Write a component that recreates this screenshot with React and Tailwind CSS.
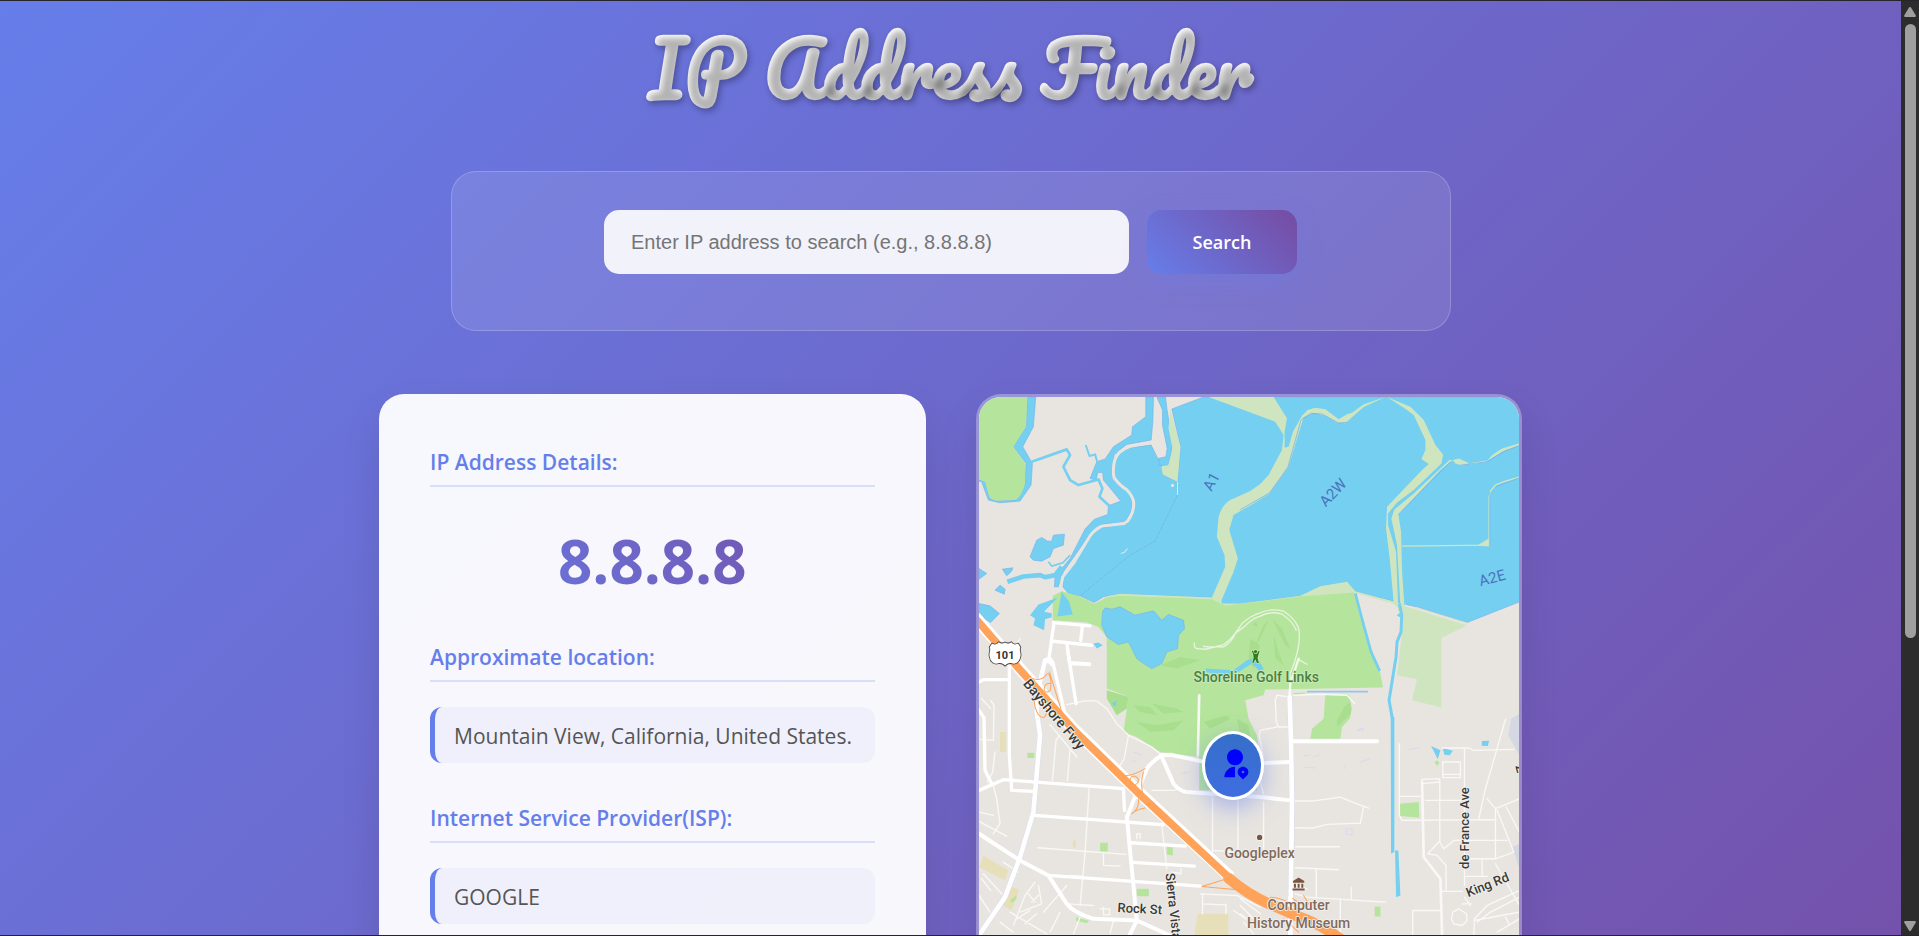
import React from "react";
import { RiUserLocationFill } from "react-icons/ri";

const DETAILS = [
  { label: "Approximate location:", value: "Mountain View, California, United States." },
  { label: "Internet Service Provider(ISP):", value: "GOOGLE" },
];

function SectionTitle({ children }) {
  return (
    <h2 className="border-b-2 border-[#667eea]/20 pb-2 text-[21px]/[30px] font-semibold text-[#667eea]">
      {children}
    </h2>
  );
}

function SearchPanel() {
  return (
    <form
      className="mx-auto flex w-full max-w-[1000px] justify-center gap-[18px] rounded-[25px] border border-white/20 bg-white/10 pt-[38px] pb-14"
      onSubmit={(e) => e.preventDefault()}
    >
      <input
        type="text"
        aria-label="IP address"
        placeholder="Enter IP address to search (e.g., 8.8.8.8)"
        className="h-16 w-[525px] rounded-[15px] bg-white/90 px-[27px] font-['Liberation_Sans',Arial,sans-serif] text-xl text-gray-800 outline-none placeholder:text-[#757575]"
      />
      <button
        type="submit"
        className="h-16 w-[150px] rounded-[15px] bg-[linear-gradient(45deg,#667eea,#764ba2)] text-lg font-semibold text-white shadow-[0_8px_25px_rgba(102,126,234,0.3)]"
      >
        Search
      </button>
    </form>
  );
}

function DetailsCard() {
  return (
    <section className="rounded-[25px] bg-white/95 px-[51px] pt-[53px] shadow-[0_20px_40px_rgba(0,0,0,0.1)]">
      <SectionTitle>IP Address Details:</SectionTitle>
      <p className="mt-[33px] bg-[linear-gradient(45deg,#667eea,#764ba2)] bg-clip-text text-center text-[60px]/[82px] font-bold text-transparent">
        8.8.8.8
      </p>
      {DETAILS.map((d) => (
        <div key={d.label} className="mt-10">
          <SectionTitle>{d.label}</SectionTitle>
          <p className="mt-[25px] rounded-xl border-l-[5px] border-[#667eea] bg-[#667eea]/5 pt-[13px] pb-[11px] pl-[19px] text-[21px]/[32px] whitespace-nowrap text-[#555]">
            {d.value}
          </p>
        </div>
      ))}
    </section>
  );
}

const WATER = "#75cff0";
const PARK = "#b5e59c";
const MARSH = "#cfe5c0";
const LAND = "#e8e5e0";

function Terrain() {
  return (
    <g>
      <rect x="27" y="36" width="1620" height="1764" fill={LAND} />
      {/* bay ponds */}
      <g fill={WATER} stroke="#74b4ee" strokeWidth="2">
        <path d="M605 72 700 36H1647V650L1490 712 1340 665 1300 658 1270 648 1150 618 990 632 810 657 750 655 725 637 450 627 400 635 372 652 330 632 300 630 278 605 280 575 310 540 360 455 395 427 460 418 485 390 495 355 480 320 430 275 425 240 440 205 480 188 543 180 560 215 575 240 578 268 622 290 631 185Z" />
        <path d="M527 36H550L548 110 543 165 470 178 432 208 425 265 480 325 488 370 465 410 395 418 357 450 280 560 265 605 253 605 255 575 300 520 345 432 372 403 413 388 415 362 452 348 400 285 398 262 383 262 378 285 360 280 380 230 405 222 430 185 485 150 487 125 527 95Z" />
        <path d="M560 36H586L590 70 607 180 603 205 593 242 568 240 565 220 587 215 591 190 577 120V75Z" />
        <path d="M172 36H197L190 125 158 185 187 235 183 300 150 348 90 353 55 345 35 290 27 288V283L45 290 60 340 80 347 135 345 165 295 168 235 130 185 168 125Z" />
        <path d="M180 515 200 465 215 457 232 468H245L250 450 283 447 280 480 250 490 240 515 215 528 190 525Z" />
        <path d="M27 550 50 565 27 582ZM97 552 128 548 125 558 110 572ZM75 615 90 600 105 612 103 627ZM27 655 60 662 88 685 62 712 27 690Z" />
      </g>
      <path d="M543 172 480 184 Q462 190 447 203 Q432 220 431 240 Q428 262 432 278 Q450 302 470 314 Q490 335 491 355 Q490 380 481 395 Q475 408 462 415 L395 423 Q375 432 360 452 L310 535 278 575 270 615" fill="none" stroke={LAND} strokeWidth="9" />
      <g fill="none" stroke={WATER} strokeLinejoin="round">
        <path d="M185 230 290 193 300 210 280 245 300 285 325 300 385 283 397 310 388 335 417 362" strokeWidth="8" />
        <path d="M347 180 358 213 375 208 384 240" strokeWidth="6" />
        <path d="M235 530 245 543 278 533 300 510" strokeWidth="5" />
        <path d="M112 590 160 574 210 570 225 576 255 570 275 545" strokeWidth="14" />
      </g>
      <path d="M622 330 555 468 480 510 332 630" fill="none" stroke="#74ade8" strokeWidth="2" strokeDasharray="12 3" />
      <path d="M622 290V330M452 505 462 502 472 490" fill="none" stroke={LAND} strokeWidth="3" />
      <circle cx="607" cy="301" r="5" fill={LAND} />
      <path d="M27 36H172L168 125 130 185 165 235V295Q155 335 135 345 L80 347 Q62 345 56 330 L45 290 27 283Z" fill={PARK} />

      {/* levees */}
      <g fill={MARSH}>
        <path d="M600 72 631 185 622 290 578 268 573 245 595 240 607 190 595 130Z" />
        <path d="M715 36H910L950 100 943 140V188L955 185 968 140 995 92 1012 75 1035 68 1065 73 1105 103 1130 88 1145 83 1180 58 1245 36 1180 66 1150 92 1125 115 1100 113 1065 92 1030 83 1000 97 985 145 955 245 898 325 845 358 790 390 777 435 803 520 790 560 752 650 725 637 765 545 763 510 740 455 745 395 Q755 360 780 345 L840 318 870 297 895 270 935 195 940 150 915 110Z" />
        <path d="M725 637 752 640 755 655 810 655 990 632 1050 603 1130 590 1155 618 1272 650 1300 658 1300 680 1100 660 765 668 450 636 372 660 410 633 450 626Z" />
      </g>
      <g transform="translate(810 0)">
        <g fill={MARSH}>
          <path d="M440 36 490 68 520 90 555 165V195L543 222 565 237 545 255 440 365 437 430 448 520 460 652 473 655 467 500 443 420V385L470 352 520 315 603 235 608 208 585 180 550 105 510 65Z" />
          <path d="M637 225H627L520 325 462 373 453 400 470 480 480 660H492L485 560 482 440 474 388 600 255Z" />
          <path d="M637 225 655 220 690 236 665 241 645 235ZM740 228 755 210 785 190 837 175V182L790 197ZM745 460V484L710 481Z" />
          <path d="M488 660 530 667 680 712 676 722 603 758V967L515 945 530 882 470 870 485 740Z" />
        </g>
        <path d="M690 236 740 228M837 276 790 290 765 300 750 318 746 335V480L485 483" fill="none" stroke={MARSH} strokeWidth="4" />
        <path d="M493 660 680 718" fill="none" stroke={LAND} strokeWidth="5" />
        <path d="M0 374 88 323 143 246 182 105 212 85 245 87 295 114 320 112M748 320V483M474 388 630 230M660 240 740 230 790 200 837 181M837 278 765 305" fill="none" stroke="#74a8f0" strokeWidth="2" />
      </g>

      {/* golf course */}
      <path d="M248 632 275 618 330 634 372 656 410 637 450 632 725 642 765 662 990 634 1150 622 1160 650 1225 840 1238 907 885 913 880 930 825 945 835 1000 860 1050 865 1100 860 1215H687V1115L570 1100 500 1055 460 1040 475 935 410 910V755L385 725 350 712 248 705Z" fill={PARK} />
      <g fill="#a8de8d">
        <path d="M410 915 475 935 470 970 440 990 410 940ZM490 960 540 965 560 990 510 980ZM545 955 620 970 640 980 580 985ZM500 1010 560 1020 640 1005 610 1035 540 1040ZM800 1000 835 1020 840 1060 810 1050ZM570 840 630 815 690 825 620 850ZM700 1010 770 990 780 1000 720 1030Z" />
        <path d="M880 720 895 705 870 760 850 790ZM905 700 935 730 960 790 945 780ZM910 750 925 800 940 840 915 820ZM840 760 870 780 850 850 835 820ZM855 710 865 725 845 720Z" />
      </g>
      <path d="M397 680 405 668 425 672 450 665 495 690 550 677 575 705 595 688 640 705 643 730 625 750 622 790 590 800 575 835 545 850 520 835 500 820 475 770 445 778 410 755 395 720Z" fill={WATER} stroke="#74b4ee" strokeWidth="2" />
      <path d="M275 620 297 650 308 688 262 694ZM262 638 205 658 180 690 195 700 190 720 222 735 225 702 245 696V684L222 680ZM425 955 440 945 435 965ZM370 775 385 772 398 780 380 790ZM705 850 790 855 830 825 860 815 880 850 870 860 845 835 790 870 710 862Z" fill={WATER} />
      <g transform="translate(810 0)">
        <path d="M350 625 457 655 472 668 470 850 435 897 418 850 395 800Z" fill={LAND} />
        <path d="M345 625 370 720 392 800 418 857" fill="none" stroke={WATER} strokeWidth="8" />
        <path d="M477 655 484 690 482 740 470 770 467 815 446 945 456 1000" fill="none" stroke={WATER} strokeWidth="9" />
        <path d="M469 690 480 682V697ZM451 995H462V1400L452 1405ZM464 1395H474L480 1530 467 1535Z" fill={WATER} />
        <path d="M200 919H383" stroke="#8fc8ee" strokeWidth="5" />
        <g fill={PARK}>
          <path d="M255 928H325L335 970 328 1000 305 1025 300 1060H210L215 1030 250 1000ZM160 923 205 922 160 933Z" />
          <path d="M478 1255 535 1250 537 1297 478 1292ZM403 1563H420V1593H403ZM582 1130 590 1125 597 1133 590 1142Z" />
        </g>
        <path d="M290 1005 312 965 330 950 332 985 290 1025Z" fill="#a8de8d" />
        <path d="M572 1082 600 1095 592 1122ZM607 1088 637 1096 628 1110 612 1108ZM724 1067 746 1066 742 1082 724 1081Z" fill={WATER} />
        <path d="M837 985 812 1000 803 1050 837 1110ZM837 1375 815 1385 837 1450Z" fill="#d5d7e2" />
      </g>
      <g transform="translate(0 810)">
        <path d="M90 230H108V290H90ZM40 600 115 645 105 675 27 635ZM110 690 148 702 125 765 98 750ZM308 555H318V577H308ZM683 775H775V840H672Z" fill="#e6dfb9" />
        <path d="M172 292H193V308H172ZM390 562H413V588H390ZM590 573 608 577V600L590 597ZM500 700H536V722H500ZM120 735 138 720 140 728 127 742ZM318 785 357 796 350 803 318 796Z" fill={PARK} />
      </g>
    </g>
  );
}

function Roads() {
  return (
    <g fill="none" strokeLinecap="round" strokeLinejoin="round">
      <g stroke="#f9f8f6" strokeWidth="4">
        <g transform="translate(0 810)">
          <path d="M62 135 72 150 70 255 30 252M62 160 35 130M75 290 68 350 52 380M268 240 258 255 247 375M300 285 292 375M240 208 320 305M290 148 345 137 380 137 410 160 440 205 475 240 545 275 575 300M475 240 462 310 450 330 430 335" />
          <path d="M357 400 345 590 330 750M203 577 467 597M545 405H612L630 398M575 510 590 640M500 550V535H510V550M400 590V630L450 632M68 385 80 430 90 505 70 535M27 470 70 480M27 498 110 542M605 650 632 655V640" />
          <path d="M100 620 145 650M35 670 62 705M40 655 95 715M27 720 60 770M195 680 165 720 130 810M205 690 215 745 150 770M120 770 230 835M140 790 180 765M165 805 200 775M90 800 130 830M220 770 290 690M290 745 370 750M390 760H418V778H400V755M270 770 240 830M330 785 310 835M430 795 420 835M185 740 205 720M175 715 195 740" />
          <path d="M727 425V590M803 435V590M727 585 803 590M690 715 800 720 870 755M697 715V775M767 745V775M697 745 765 748M790 765 870 820M820 800 850 835M300 660 335 662" />
          <path d="M687 120 683 300" strokeWidth="8" />
        </g>
        <g transform="translate(810 810)">
          <path d="M145 125 110 120 105 135 108 200 115 215 145 215M110 215 60 225 57 240 68 300 60 380 70 415M160 120 240 117 320 120 343 145M165 437 215 437 300 425 355 448 385 458M370 452 360 503 260 507 215 518 165 517M165 574H297M165 637 295 643M228 643V725M70 440V580M165 715 200 725 435 740M333 695V730M300 730V840M200 700 170 690" />
          <path d="M477 265V480L485 495 715 493H767M477 423H540M555 435H670M605 278H685L700 285 820 282M672 278V620M607 320H660V367H607ZM610 357H657M598 370V560L610 580 640 555H800M598 370 545 372V385L598 380M795 192 735 400 715 490M740 430 765 460V610M765 460 837 430M770 465 820 590 765 610H672M797 455 837 530M725 612V660M672 663H740M765 625 837 750M595 560 562 595 590 600 617 630V705" />
          <path d="M517 840V765H605M605 708H665M672 640V690M672 725 690 750M665 745H692M700 840 702 790 740 750 837 705M710 800 750 770 837 725M700 795 837 770M795 785 805 805M770 830 837 790M637 770 655 760 678 775 680 795 665 810 640 805 633 790Z" />
          <path d="M545 380 550 605 600 670 605 840" strokeWidth="8" />
          <path d="M0 730 60 775M0 750 40 790M0 775 25 795" />
        </g>
        <path d="M672 773Q672 790 682 790L705 792 755 780Q780 770 815 715Q840 692 870 683Q900 668 940 678Q975 700 985 730Q995 780 960 865L958 915M712 785 760 785Q785 770 795 745L825 722Q845 700 870 693Q900 676 935 687Q965 705 978 735M985 823 1010 837M700 783 712 785" opacity=".75" />
        <path d="M150 760 130 790M240 830 255 850" />
      </g>

      <g stroke="#d9dced" strokeWidth="17">
        <path d="M30 1645 105 1535 150 1415 190 1280 210 1050 200 980 205 910 225 825M958 935 962 1060 965 1250 960 1650" />
      </g>
      <g stroke="#fff" strokeWidth="10">
        <path d="M250 712 360 722M337 722 332 765M250 768 364 780M290 772 298 832 358 836M252 712 235 830" />
        <g transform="translate(0 810)">
          <path d="M30 835 105 725 150 605 190 470 210 240 200 170 205 100 225 15 240 12 245 25" strokeWidth="14" />
          <path d="M27 405 100 373 460 400 463 465M27 80 40 73H115M118 25V300L125 405 195 408M27 165 42 188 45 345 65 385M195 480 580 508M225 15 248 20 290 200M292-20 318 145M300 25 358 28M482 562 645 572M487 621 673 632" />
          <path d="M27 535 150 615 235 660 290 745Q310 772 370 790L500 795 600 840M478 840 500 795 470 485 530 340Q545 318 575 300L600 298 695 318M575 305 610 385Q630 408 650 410L870 425 960 435" strokeWidth="12" />
          <path d="M235 660 690 692" />
        </g>
        <g transform="translate(810 810)">
          <path d="M148 125 152 250 155 440 150 840" strokeWidth="14" />
          <path d="M155 258H410M75 323 150 320" strokeWidth="12" />
          <path d="M148 120 150 85 175 10" strokeWidth="7" opacity=".8" />
        </g>
      </g>

      <path d="M15 695 145 845 310 1030 510 1225 780 1475" stroke="#fff" strokeWidth="36" strokeLinecap="butt" />
      <g stroke="#ffa35b">
        <g strokeWidth="3">
          <path d="M235 865Q248 885 240 915Q225 928 222 910Q225 892 240 895M238 860 275 980M190 930 195 965Q205 1000 222 996Q235 985 228 965M190 880Q215 890 232 865M465 1172Q495 1168 525 1150M480 1190Q478 1172 493 1172Q508 1178 504 1190L490 1205M520 1160Q510 1190 518 1225M485 1285Q500 1272 525 1268M485 1285Q508 1270 505 1240M695 1503 770 1480M695 1503 825 1515" />
          <path d="M900 1535Q960 1540 990 1580L1010 1620M960 1535 1000 1560M940 1600 985 1640M1000 1530 1015 1555 980 1575" />
        </g>
        <path d="M15 698 145 848 310 1033 510 1228 780 1480" strokeWidth="23" strokeLinecap="butt" />
        <path d="M775 1478 Q830 1525 890 1552 L980 1592 Q1050 1615 1110 1660" strokeWidth="32" />
      </g>
      <path d="M960 1535 960 1560M960 1625V1660" stroke="#fff" strokeWidth="12" />
      <g stroke="#d8daeb" strokeWidth="3">
        <path d="M1000 1112 1020 1108M1030 1115 1048 1108M1000 1146 1035 1148M1160 1035 1175 1028 1180 1035ZM1170 1130 1200 1120M1125 1140V1150M1128 1330H1145V1348H1128ZM1310 1093 1345 1088M635 1165 655 1160M490 1100 515 1110M485 1130 500 1125" />
      </g>
    </g>
  );
}

function MapLabels() {
  return (
    <g
      className="font-['Roboto',sans-serif] font-medium"
      fontSize="42"
      textAnchor="middle"
      stroke="#f3f1ec"
      strokeWidth="5"
      strokeLinejoin="round"
      paintOrder="stroke"
    >
      <g fill="#4a74bb" stroke="none" fontSize="45" className="font-normal">
        <text transform="translate(737 297) rotate(-62)">A1</text>
        <text transform="translate(1099 333) rotate(-46)">A2W</text>
        <text transform="translate(1569 593) rotate(-15)">A2E</text>
      </g>
      <text x="858" y="889" fill="#4b8040" stroke="#cdebbb">Shoreline Golf Links</text>
      <g fill="#816a5c">
        <circle cx="868" cy="1356" r="8" fill="#7a5540" />
        <text x="868" y="1417">Googleplex</text>
        <text x="985" y="1573">Computer</text>
        <text x="985" y="1627">History Museum</text>
      </g>
      <g fill="#3a3a3a" fontSize="39">
        <text transform="translate(241 996) rotate(50)" fontSize="42">Bayshore Fwy</text>
        <text transform="translate(508 1583) rotate(3)">Rock St</text>
        <text transform="translate(586 1464) rotate(84)" textAnchor="start">Sierra Vista</text>
        <text transform="translate(1495 1328) rotate(-90)">de France Ave</text>
        <text transform="translate(1556 1510) rotate(-22)">King Rd</text>
        <text transform="translate(1634 1142) rotate(75)" textAnchor="start">Z</text>
      </g>
      {/* museum */}
      <g fill="#7a5540" stroke="#f3f1ec" strokeWidth="3">
        <path d="M985 1476 1002 1487V1492H968V1487ZM971 1495H977V1507H971ZM982 1495H988V1507H982ZM993 1495H999V1507H993ZM967 1509H1003V1515H967Z" />
      </g>
      {/* golfer */}
      <g fill="#2f7d1c" stroke="#d9f0cc" strokeWidth="3">
        <path d="M844 796 850 797 854 805 860 805 866 796 868 798 864 810 862 818 866 833 860 833 855 822 850 833 846 832 850 818 849 808Z" />
        <circle cx="856" cy="799" r="5" />
      </g>
      {/* highway shield */}
      <path d="M66 775C74 780 82 777 86 771 94 777 100 775 105 772 110 775 116 777 124 771 128 777 136 780 144 775L151 786C146 794 154 802 151 814 148 832 136 838 125 834 116 832 110 836 105 841 100 836 94 832 85 834 74 838 62 832 59 814 56 802 64 794 59 786Z" fill="#fff" stroke="#444" strokeWidth="5" />
      <text x="105" y="820" fontSize="33" className="font-bold" fill="#333" stroke="none">101</text>
    </g>
  );
}

function MapCard() {
  return (
    <section
      aria-label="Map"
      className="relative overflow-hidden rounded-[25px] border-[3px] border-white/30 bg-[#e8e5e0] bg-clip-padding shadow-[0_20px_40px_rgba(0,0,0,0.1)]"
    >
      <svg viewBox="27 36 1620 1800" preserveAspectRatio="xMidYMin slice" className="block w-full" aria-hidden="true">
        <Terrain />
        <Roads />
        <MapLabels />
      </svg>
      <div className="absolute top-[334px] left-[47%] flex h-[69px] w-[62px] -translate-x-1/2 items-center justify-center rounded-[50%] border-[3px] border-white bg-linear-to-b from-[#356fc9] to-[#3f6de0] pb-1 pl-1 text-[#0000ff] shadow-[0_8px_25px_rgba(102,126,234,0.5)]">
        <RiUserLocationFill className="size-8 shrink-0" />
      </div>
    </section>
  );
}

function ScrollRail() {
  return (
    <div aria-hidden="true" className="flex w-[18px] shrink-0 flex-col items-center bg-[#2c2c2c] pt-1.5 pb-1">
      <svg viewBox="0 0 12 10" className="h-2.5 w-3 fill-[#9f9f9f]">
        <path d="M6 0Q6.6 0 7 .6L11.8 8.4Q12 10 11 10H1Q0 10 .2 8.4L5 .6Q5.4 0 6 0Z" />
      </svg>
      <div className="mt-[7px] flex w-[11px] flex-1 flex-col">
        <div className="grow-13 rounded-full bg-[#9f9f9f]" />
        <div className="grow-6" />
      </div>
      <svg viewBox="0 0 12 10" className="h-2.5 w-3 fill-[#9f9f9f]">
        <path d="M6 10Q6.6 10 7 9.4L11.8 1.6Q12 0 11 0H1Q0 0 .2 1.6L5 9.4Q5.4 10 6 10Z" />
      </svg>
    </div>
  );
}

export default function App() {
  return (
    <div className="flex h-screen overflow-hidden border-y border-[#25252b] bg-[#2c2c2c] font-['Segoe_UI','Open_Sans','Noto_Sans',sans-serif]">
      <div className="min-w-0 flex-1 overflow-hidden">
        <main className="min-h-[1370px] bg-[linear-gradient(135deg,#667eea_0%,#764ba2_100%)]">
          <h1 className="mx-auto w-fit bg-white bg-clip-text px-3 text-center font-['Pacifico',cursive] text-[74px]/[134px] font-bold text-transparent [text-shadow:2px_3px_6px_rgba(0,0,0,0.3)]">
            IP Address Finder
          </h1>
          <div className="mt-9">
            <SearchPanel />
          </div>
          <div className="mx-auto mt-[63px] grid min-h-[600px] w-full max-w-[1143px] grid-cols-2 gap-[50px]">
            <DetailsCard />
            <MapCard />
          </div>
        </main>
      </div>
      <ScrollRail />
    </div>
  );
}
